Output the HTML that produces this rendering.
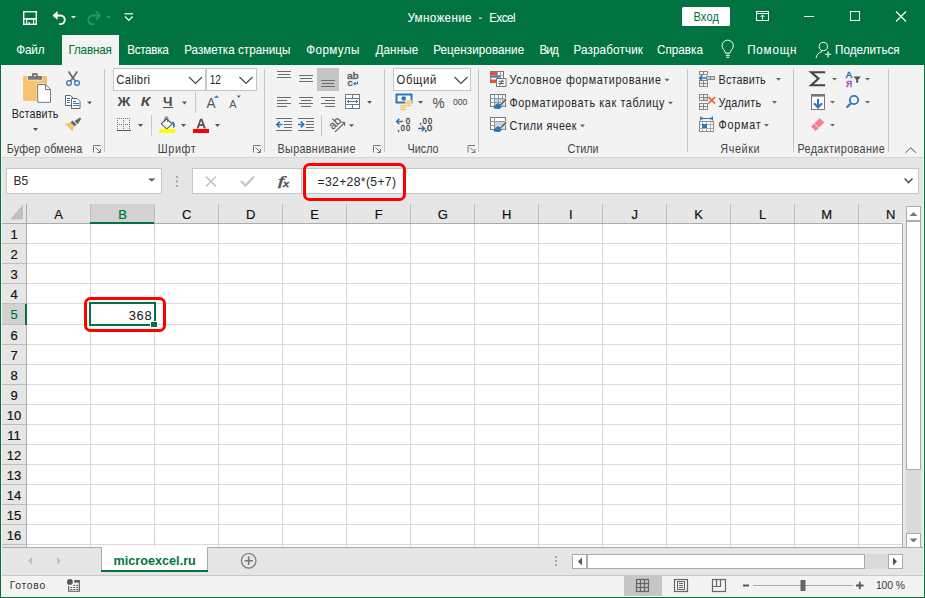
<!DOCTYPE html>
<html><head><meta charset="utf-8"><title>Excel</title>
<style>
html,body{margin:0;padding:0;width:925px;height:598px;overflow:hidden;background:#fff;}
svg{display:block;font-family:"Liberation Sans",sans-serif;}
</style></head><body>
<svg width="925" height="598" viewBox="0 0 925 598" shape-rendering="crispEdges">
<g shape-rendering="auto">
<rect x="0" y="0" width="925" height="65" fill="#007340" />
<rect x="0" y="65" width="925" height="92" fill="#F3F3F3" />
<line x1="0" y1="157.5" x2="925" y2="157.5" stroke="#D6D6D6" stroke-width="1" />
<rect x="0" y="158" width="925" height="390" fill="#E6E6E6" />
<rect x="23.7" y="11.7" width="12.6" height="12.6" fill="none" stroke="#fff" stroke-width="1.4" />
<line x1="23.7" y1="18.9" x2="36.3" y2="18.9" stroke="#fff" stroke-width="1.4" />
<path d="M26.6 24.3v-5.4h7v5.4" fill="none" stroke="#fff" stroke-width="1.2" />
<rect x="28.5" y="22" width="1.6" height="2.3" fill="#fff" />
<path d="M53.5 15.5h7a4.3 4.3 0 0 1 0 8.6h-1.5" fill="none" stroke="#fff" stroke-width="1.9" />
<path d="M53 15.5l4.2-3.8v7.6z" fill="#fff" stroke="#fff" stroke-width="0.8" />
<path d="M71 16h5l-2.5 2.6z" fill="#fff" />
<path d="M100 15.5h-7.5a4.3 4.3 0 0 0 0 8.6h1.5" fill="none" stroke="#1f9a73" stroke-width="1.8" />
<path d="M96 11.5l4 4-4 4" fill="none" stroke="#1f9a73" stroke-width="1.8" />
<path d="M106 16h5l-2.5 2.6z" fill="#1f9a73" />
<line x1="124.5" y1="13.8" x2="133" y2="13.8" stroke="#fff" stroke-width="1.2" />
<path d="M125 16.5l3.8 4 3.8-4" fill="none" stroke="#fff" stroke-width="1.2" />
<text x="428.84" y="21.9" transform="scale(0.95,1)" font-size="12.3" fill="#fff" stroke="#fff" stroke-width="0.05" textLength="67.58" lengthAdjust="spacing" >Умножение</text>
<rect x="479" y="17.6" width="2.8" height="1.1" fill="#fff" />
<text x="514.95" y="21.9" transform="scale(0.95,1)" font-size="12.3" fill="#fff" stroke="#fff" stroke-width="0.05" textLength="27.79" lengthAdjust="spacing" >Excel</text>
<rect x="682" y="7" width="48" height="19" fill="#fff" rx="1.5" />
<text x="770.44" y="21.1" transform="scale(0.9,1)" font-size="12.3" fill="#007340" textLength="28.44" lengthAdjust="spacing" >Вход</text>
<rect x="756.5" y="11.5" width="12" height="9" fill="none" stroke="#fff" stroke-width="1" />
<line x1="756.5" y1="13.5" x2="768.5" y2="13.5" stroke="#fff" stroke-width="1" />
<line x1="762.5" y1="19.5" x2="762.5" y2="15" stroke="#fff" stroke-width="1" />
<path d="M760.5 17l2-2 2 2" fill="none" stroke="#fff" stroke-width="1" />
<line x1="804" y1="16.5" x2="814" y2="16.5" stroke="#fff" stroke-width="1" />
<rect x="850.5" y="11.5" width="9" height="9" fill="none" stroke="#fff" stroke-width="1" />
<path d="M896 11.5l10 10M906 11.5l-10 10" fill="none" stroke="#fff" stroke-width="1.1" />
<rect x="62" y="35" width="57" height="30" fill="#F3F3F3" />
<text x="17.05" y="53.9" transform="scale(0.95,1)" font-size="12.3" fill="#fff" stroke="#fff" stroke-width="0.05" textLength="29.89" lengthAdjust="spacing" >Файл</text>
<text x="72.00" y="53.9" transform="scale(0.95,1)" font-size="12.3" fill="#007340" stroke="#007340" stroke-width="0.05" textLength="45.79" lengthAdjust="spacing" >Главная</text>
<text x="133.89" y="53.9" transform="scale(0.95,1)" font-size="12.3" fill="#fff" stroke="#fff" stroke-width="0.05" textLength="43.68" lengthAdjust="spacing" >Вставка</text>
<text x="193.89" y="53.9" transform="scale(0.95,1)" font-size="12.3" fill="#fff" stroke="#fff" stroke-width="0.05" textLength="111.68" lengthAdjust="spacing" >Разметка страницы</text>
<text x="322.32" y="53.9" transform="scale(0.95,1)" font-size="12.3" fill="#fff" stroke="#fff" stroke-width="0.05" textLength="56.11" lengthAdjust="spacing" >Формулы</text>
<text x="395.16" y="53.9" transform="scale(0.95,1)" font-size="12.3" fill="#fff" stroke="#fff" stroke-width="0.05" textLength="45.16" lengthAdjust="spacing" >Данные</text>
<text x="456.00" y="53.9" transform="scale(0.95,1)" font-size="12.3" fill="#fff" stroke="#fff" stroke-width="0.05" textLength="95.79" lengthAdjust="spacing" >Рецензирование</text>
<text x="567.79" y="53.9" transform="scale(0.95,1)" font-size="12.3" fill="#fff" stroke="#fff" stroke-width="0.05" textLength="20.42" lengthAdjust="spacing" >Вид</text>
<text x="603.58" y="53.9" transform="scale(0.95,1)" font-size="12.3" fill="#fff" stroke="#fff" stroke-width="0.05" textLength="73.26" lengthAdjust="spacing" >Разработчик</text>
<text x="691.58" y="53.9" transform="scale(0.95,1)" font-size="12.3" fill="#fff" stroke="#fff" stroke-width="0.05" textLength="48.42" lengthAdjust="spacing" >Справка</text>
<text x="786.53" y="53.9" transform="scale(0.95,1)" font-size="12.3" fill="#fff" stroke="#fff" stroke-width="0.05" textLength="51.89" lengthAdjust="spacing" >Помощн</text>
<text x="878.95" y="53.9" transform="scale(0.95,1)" font-size="12.3" fill="#fff" stroke="#fff" stroke-width="0.05" textLength="68.11" lengthAdjust="spacing" >Поделиться</text>
<line x1="176.5" y1="38" x2="176.5" y2="61" stroke="#066C3B" stroke-width="1" />
<line x1="298.5" y1="38" x2="298.5" y2="61" stroke="#066C3B" stroke-width="1" />
<line x1="367.5" y1="38" x2="367.5" y2="61" stroke="#066C3B" stroke-width="1" />
<line x1="425.5" y1="38" x2="425.5" y2="61" stroke="#066C3B" stroke-width="1" />
<line x1="531.5" y1="38" x2="531.5" y2="61" stroke="#066C3B" stroke-width="1" />
<line x1="566.5" y1="38" x2="566.5" y2="61" stroke="#066C3B" stroke-width="1" />
<line x1="649.5" y1="38" x2="649.5" y2="61" stroke="#066C3B" stroke-width="1" />
<line x1="709.5" y1="38" x2="709.5" y2="61" stroke="#066C3B" stroke-width="1" />
<path d="M725.6 53.2c-0.3-1.6-1.2-2.7-2.2-3.9a5.6 5.6 0 1 1 8.6 0c-1 1.2-1.9 2.3-2.2 3.9z" fill="none" stroke="#fff" stroke-width="1" />
<line x1="725.8" y1="55.3" x2="729.8" y2="55.3" stroke="#fff" stroke-width="1" />
<line x1="726.3" y1="57.3" x2="729.3" y2="57.3" stroke="#fff" stroke-width="1" />
<circle cx="823.3" cy="46.5" r="4.1" fill="none" stroke="#fff" stroke-width="1"/>
<path d="M816 58.2c0.6-3.6 2.8-6 6.2-6.6" fill="none" stroke="#fff" stroke-width="1" />
<path d="M828.1 51.2v6.2M825 54.3h6.2" fill="none" stroke="#fff" stroke-width="1.1" />
<text x="7.44" y="153.5" transform="scale(0.9,1)" font-size="12" fill="#444" textLength="84.00" lengthAdjust="spacing" >Буфер обмена</text>
<text x="175.33" y="153.5" transform="scale(0.9,1)" font-size="12" fill="#444" textLength="42.22" lengthAdjust="spacing" >Шрифт</text>
<text x="308.44" y="153.5" transform="scale(0.9,1)" font-size="12" fill="#444" textLength="86.44" lengthAdjust="spacing" >Выравнивание</text>
<text x="452.67" y="153.5" transform="scale(0.9,1)" font-size="12" fill="#444" textLength="34.67" lengthAdjust="spacing" >Число</text>
<text x="630.67" y="153.5" transform="scale(0.9,1)" font-size="12" fill="#444" textLength="34.44" lengthAdjust="spacing" >Стили</text>
<text x="800.22" y="153.5" transform="scale(0.9,1)" font-size="12" fill="#444" textLength="43.78" lengthAdjust="spacing" >Ячейки</text>
<text x="886.00" y="153.5" transform="scale(0.9,1)" font-size="12" fill="#444" textLength="97.11" lengthAdjust="spacing" >Редактирование</text>
<line x1="104.5" y1="69" x2="104.5" y2="152" stroke="#C8C8C8" stroke-width="1" />
<line x1="264.5" y1="69" x2="264.5" y2="152" stroke="#C8C8C8" stroke-width="1" />
<line x1="384.5" y1="69" x2="384.5" y2="152" stroke="#C8C8C8" stroke-width="1" />
<line x1="478.5" y1="69" x2="478.5" y2="152" stroke="#C8C8C8" stroke-width="1" />
<line x1="687.5" y1="69" x2="687.5" y2="152" stroke="#C8C8C8" stroke-width="1" />
<line x1="793.5" y1="69" x2="793.5" y2="152" stroke="#C8C8C8" stroke-width="1" />
<line x1="888.5" y1="69" x2="888.5" y2="152" stroke="#C8C8C8" stroke-width="1" />
<path d="M93.5 152.5v-7h7" fill="none" stroke="#777" stroke-width="1" />
<path d="M95.5 147.5l5 5M100.5 149v3.5h-3.5" fill="none" stroke="#777" stroke-width="1" />
<path d="M253.5 152.5v-7h7" fill="none" stroke="#777" stroke-width="1" />
<path d="M255.5 147.5l5 5M260.5 149v3.5h-3.5" fill="none" stroke="#777" stroke-width="1" />
<path d="M373.5 152.5v-7h7" fill="none" stroke="#777" stroke-width="1" />
<path d="M375.5 147.5l5 5M380.5 149v3.5h-3.5" fill="none" stroke="#777" stroke-width="1" />
<path d="M468.0 152.5v-7h7" fill="none" stroke="#777" stroke-width="1" />
<path d="M470.0 147.5l5 5M475.0 149v3.5h-3.5" fill="none" stroke="#777" stroke-width="1" />
<path d="M905.5 152.8l5.3-5 5.3 5" fill="none" stroke="#444" stroke-width="0.9" />
<rect x="23" y="76" width="24" height="25" fill="#F7C36E" rx="1" />
<path d="M27.5 76.2h15v4.3h-15z" fill="#F3F3F3" />
<rect x="28" y="76" width="14" height="3.7" fill="#777" rx="0.5" />
<rect x="32" y="73" width="5.7" height="4" fill="#777" rx="1" />
<circle cx="34.9" cy="75.6" r="0.9" fill="#F3F3F3"/>
<path d="M36.7 83.5h9.2l5.5 5.5v14.1h-14.7z" fill="#F3F3F3" />
<path d="M37.7 84.5h8l4.8 4.8v13h-12.8z" fill="#fff" stroke="#777" stroke-width="1" />
<path d="M45.5 84.5v5h5" fill="none" stroke="#777" stroke-width="1" />
<text x="13.00" y="117.7" transform="scale(0.9,1)" font-size="12" fill="#262626" textLength="52.00" lengthAdjust="spacing" >Вставить</text>
<path d="M33 128h5l-2.5 3z" fill="#555" />
<path d="M68.6 71.5l4.3 6.5 4.3-6.5" fill="none" stroke="#666" stroke-width="1.6" />
<path d="M72.9 78l-3 3.5M72.9 78l3 3.5" fill="none" stroke="#666" stroke-width="1.3" />
<circle cx="69" cy="83" r="2.4" fill="none" stroke="#2E75B6" stroke-width="1.2"/>
<circle cx="77" cy="83" r="2.4" fill="none" stroke="#2E75B6" stroke-width="1.2"/>
<path d="M65.5 95.5h5l2.5 2.5v7.5h-7.5z" fill="#fff" stroke="#666" stroke-width="1" />
<path d="M71.5 98.5h5.5l3 3v7h-8.5z" fill="#fff" stroke="#666" stroke-width="1" />
<line x1="67" y1="98.5" x2="70" y2="98.5" stroke="#2E75B6" stroke-width="1" />
<line x1="67" y1="100.5" x2="70" y2="100.5" stroke="#2E75B6" stroke-width="1" />
<line x1="67" y1="102.5" x2="70" y2="102.5" stroke="#2E75B6" stroke-width="1" />
<line x1="73" y1="101.5" x2="76" y2="101.5" stroke="#2E75B6" stroke-width="1" />
<line x1="73" y1="103.5" x2="79" y2="103.5" stroke="#2E75B6" stroke-width="1" />
<line x1="73" y1="105.5" x2="79" y2="105.5" stroke="#2E75B6" stroke-width="1" />
<path d="M87 101.5h5l-2.5 2.8z" fill="#555" />
<path d="M65 124l5-1.5 4 4-1.5 5z" fill="#F7C36E" />
<path d="M70.5 122.5l2-2 4 4-2 2z" fill="#666" />
<path d="M74.5 121l5.5-3.5 1.2 1.2-3.5 5.5z" fill="#666" />
<rect x="113.5" y="68.5" width="92" height="22" fill="#fff" stroke="#C6C6C6" stroke-width="1" />
<rect x="206.5" y="68.5" width="50" height="22" fill="#fff" stroke="#C6C6C6" stroke-width="1" />
<text x="129.11" y="83.6" transform="scale(0.9,1)" font-size="12.5" fill="#262626" textLength="37.56" lengthAdjust="spacing" >Calibri</text>
<text x="209.7" y="83.6" font-size="12.5" fill="#262626" textLength="11.3" lengthAdjust="spacingAndGlyphs" text-anchor="start" >12</text>
<path d="M189 77l6.5 6.5 6.5-6.5" fill="none" stroke="#444" stroke-width="1.1" />
<path d="M239.5 77l6.5 6.5 6.5-6.5" fill="none" stroke="#444" stroke-width="1.1" />
<text x="117.5" y="105.9" font-size="12.6" fill="#4A4A4A" font-weight="bold" textLength="12.9" lengthAdjust="spacingAndGlyphs" text-anchor="start" >Ж</text>
<text x="140.8" y="105.9" font-size="12.6" fill="#4A4A4A" font-weight="bold" textLength="9.5" lengthAdjust="spacingAndGlyphs" text-anchor="start" font-style="italic">К</text>
<text x="163.0" y="105.9" font-size="12.6" fill="#4A4A4A" font-weight="bold" textLength="9.5" lengthAdjust="spacingAndGlyphs" text-anchor="start" >Ч</text>
<line x1="163" y1="107.5" x2="173" y2="107.5" stroke="#4A4A4A" stroke-width="1" />
<path d="M182 101.5h5l-2.5 3z" fill="#555" />
<line x1="195.5" y1="92" x2="195.5" y2="113" stroke="#C8C8C8" stroke-width="1" />
<text x="206.4" y="107.7" font-size="13.8" fill="#555" textLength="9.1" lengthAdjust="spacingAndGlyphs" text-anchor="start" >A</text>
<path d="M214 97.8l2.5-2.6 2.5 2.6z" fill="#2E75B6" />
<text x="229.2" y="107.9" font-size="11.2" fill="#555" textLength="7.3" lengthAdjust="spacingAndGlyphs" text-anchor="start" >A</text>
<path d="M236.5 95.4h4.5l-2.25 2.6z" fill="#2E75B6" />
<path d="M117 118.5h14" fill="none" stroke="#777" stroke-width="1" stroke-dasharray="1 1"/>
<path d="M117 124.5h14" fill="none" stroke="#777" stroke-width="1" stroke-dasharray="1 1"/>
<path d="M117.5 118v12" fill="none" stroke="#777" stroke-width="1" stroke-dasharray="1 1"/>
<path d="M123.5 118v12" fill="none" stroke="#777" stroke-width="1" stroke-dasharray="1 1"/>
<path d="M129.5 118v12" fill="none" stroke="#777" stroke-width="1" stroke-dasharray="1 1"/>
<line x1="117" y1="130.5" x2="131" y2="130.5" stroke="#555" stroke-width="1" />
<path d="M138 124h5l-2.5 3z" fill="#555" />
<line x1="151.5" y1="115" x2="151.5" y2="135.5" stroke="#C8C8C8" stroke-width="1" />
<path d="M161.3 123.8l5-5 6 5-5.5 5z" fill="#fff" stroke="#555" stroke-width="1.1" />
<path d="M165 121.5v-3.2a1.4 1.4 0 0 1 2.8 0v3.8" fill="none" stroke="#555" stroke-width="1" />
<path d="M172.2 121.3c1.8 0.8 3 2.3 2.8 4.3-0.3 1.5-1.2 2.3-2.2 2.7 0.5-1.5 0.6-3.5-0.6-4.8z" fill="#2E75B6" />
<rect x="159" y="129" width="16" height="4" fill="#FFFF00" />
<path d="M181 124h5l-2.5 3z" fill="#555" />
<path d="M196.5 128.6l3.6-9.9h2.2l3.6 9.9h-2.1l-0.9-2.6h-3.5l-0.9 2.6zM199.9 124.3h2.5l-1.25-3.7z" fill="#555" />
<rect x="193" y="129" width="16" height="4" fill="#FF0000" />
<path d="M215 124h5l-2.5 3z" fill="#555" />
<line x1="277" y1="71.5" x2="291" y2="71.5" stroke="#6B6B6B" stroke-width="1" />
<line x1="278" y1="74.5" x2="290" y2="74.5" stroke="#6B6B6B" stroke-width="1" />
<line x1="277" y1="77.5" x2="291" y2="77.5" stroke="#6B6B6B" stroke-width="1" />
<line x1="299" y1="75.5" x2="313" y2="75.5" stroke="#6B6B6B" stroke-width="1" />
<line x1="300" y1="78.5" x2="312" y2="78.5" stroke="#6B6B6B" stroke-width="1" />
<line x1="299" y1="81.5" x2="313" y2="81.5" stroke="#6B6B6B" stroke-width="1" />
<rect x="317" y="68" width="22" height="23" fill="#C6C6C6" />
<line x1="321" y1="80.5" x2="335" y2="80.5" stroke="#6B6B6B" stroke-width="1" />
<line x1="322" y1="83.5" x2="334" y2="83.5" stroke="#6B6B6B" stroke-width="1" />
<line x1="321" y1="86.5" x2="335" y2="86.5" stroke="#6B6B6B" stroke-width="1" />
<text x="346.9" y="78.7" font-size="8.6" fill="#555" stroke="#555" stroke-width="0.35" textLength="11.5" lengthAdjust="spacingAndGlyphs" text-anchor="start" >ab</text>
<text x="347.4" y="86.3" font-size="8.6" fill="#555" stroke="#555" stroke-width="0.35" textLength="5.1" lengthAdjust="spacingAndGlyphs" text-anchor="start" >c</text>
<path d="M357.5 81.5v2.2h-3.5M355.5 82.2l-1.6 1.5 1.6 1.5" fill="none" stroke="#2E75B6" stroke-width="1.1" />
<line x1="277" y1="97.5" x2="291" y2="97.5" stroke="#6B6B6B" stroke-width="1" />
<line x1="277" y1="100.5" x2="287" y2="100.5" stroke="#6B6B6B" stroke-width="1" />
<line x1="277" y1="103.5" x2="291" y2="103.5" stroke="#6B6B6B" stroke-width="1" />
<line x1="277" y1="106.5" x2="287" y2="106.5" stroke="#6B6B6B" stroke-width="1" />
<line x1="299" y1="97.5" x2="313" y2="97.5" stroke="#6B6B6B" stroke-width="1" />
<line x1="301" y1="100.5" x2="311" y2="100.5" stroke="#6B6B6B" stroke-width="1" />
<line x1="299" y1="103.5" x2="313" y2="103.5" stroke="#6B6B6B" stroke-width="1" />
<line x1="301" y1="106.5" x2="311" y2="106.5" stroke="#6B6B6B" stroke-width="1" />
<line x1="321" y1="97.5" x2="335" y2="97.5" stroke="#6B6B6B" stroke-width="1" />
<line x1="325" y1="100.5" x2="335" y2="100.5" stroke="#6B6B6B" stroke-width="1" />
<line x1="321" y1="103.5" x2="335" y2="103.5" stroke="#6B6B6B" stroke-width="1" />
<line x1="325" y1="106.5" x2="335" y2="106.5" stroke="#6B6B6B" stroke-width="1" />
<rect x="345.5" y="94.5" width="14" height="14" fill="#fff" stroke="#777" stroke-width="1" />
<line x1="345.5" y1="98.5" x2="359.5" y2="98.5" stroke="#777" stroke-width="1" />
<line x1="345.5" y1="104.5" x2="359.5" y2="104.5" stroke="#777" stroke-width="1" />
<line x1="352.5" y1="94.5" x2="352.5" y2="98.5" stroke="#777" stroke-width="1" />
<line x1="352.5" y1="104.5" x2="352.5" y2="108.5" stroke="#777" stroke-width="1" />
<rect x="346" y="99" width="13" height="5" fill="#fff" />
<path d="M347.5 101.5h10M349 100l-1.5 1.5 1.5 1.5M356 100l1.5 1.5-1.5 1.5" fill="none" stroke="#2E75B6" stroke-width="1" />
<path d="M367 101h5l-2.5 2.8z" fill="#555" />
<line x1="276" y1="118.5" x2="292" y2="118.5" stroke="#6B6B6B" stroke-width="1" />
<line x1="284" y1="121.5" x2="292" y2="121.5" stroke="#6B6B6B" stroke-width="1" />
<line x1="284" y1="124.5" x2="292" y2="124.5" stroke="#6B6B6B" stroke-width="1" />
<line x1="284" y1="127.5" x2="292" y2="127.5" stroke="#6B6B6B" stroke-width="1" />
<line x1="276" y1="130.5" x2="292" y2="130.5" stroke="#6B6B6B" stroke-width="1" />
<path d="M277 124.5h5.5M279.7 121.6l-2.9 2.9 2.9 2.9" fill="none" stroke="#2E75B6" stroke-width="1.6" />
<line x1="298" y1="118.5" x2="314" y2="118.5" stroke="#6B6B6B" stroke-width="1" />
<line x1="306" y1="121.5" x2="314" y2="121.5" stroke="#6B6B6B" stroke-width="1" />
<line x1="306" y1="124.5" x2="314" y2="124.5" stroke="#6B6B6B" stroke-width="1" />
<line x1="306" y1="127.5" x2="314" y2="127.5" stroke="#6B6B6B" stroke-width="1" />
<line x1="298" y1="130.5" x2="314" y2="130.5" stroke="#6B6B6B" stroke-width="1" />
<path d="M298 124.5h5.5M300.8 121.6l2.9 2.9-2.9 2.9" fill="none" stroke="#2E75B6" stroke-width="1.6" />
<line x1="321.5" y1="115" x2="321.5" y2="136" stroke="#C8C8C8" stroke-width="1" />
<text x="328.6" y="126.8" font-size="11.5" fill="#555" stroke="#555" stroke-width="0.2" textLength="12.6" lengthAdjust="spacingAndGlyphs" text-anchor="start" transform="rotate(-45 334.9 123.2)">ab</text>
<path d="M335 131.8l9.5-9" fill="none" stroke="#555" stroke-width="1.1" />
<path d="M341.2 122.3h3.5v3.5" fill="none" stroke="#555" stroke-width="1" />
<path d="M349 124.3h5l-2.5 2.6z" fill="#555" />
<rect x="393.5" y="68.5" width="77" height="22" fill="#fff" stroke="#C6C6C6" stroke-width="1" />
<text x="440.44" y="84.0" transform="scale(0.9,1)" font-size="12.5" fill="#262626" textLength="44.44" lengthAdjust="spacing" >Общий</text>
<path d="M454.5 77l6.5 6.5 6.5-6.5" fill="none" stroke="#444" stroke-width="1.1" />
<rect x="396.5" y="94.5" width="15" height="8" fill="#fff" stroke="#2E75B6" stroke-width="2" />
<circle cx="403.7" cy="98.5" r="2.3" fill="#2E75B6"/>
<ellipse cx="408.5" cy="101" rx="3.6" ry="1.1" fill="#F7C36E" stroke="#F3F3F3" stroke-width="0.5"/>
<ellipse cx="408.5" cy="103.2" rx="3.6" ry="1.1" fill="#F7C36E" stroke="#F3F3F3" stroke-width="0.5"/>
<ellipse cx="408.5" cy="105.4" rx="3.6" ry="1.1" fill="#F7C36E" stroke="#F3F3F3" stroke-width="0.5"/>
<ellipse cx="403.3" cy="105.5" rx="3.6" ry="1.1" fill="#F7C36E" stroke="#F3F3F3" stroke-width="0.5"/>
<ellipse cx="403.3" cy="107.7" rx="3.6" ry="1.1" fill="#F7C36E" stroke="#F3F3F3" stroke-width="0.5"/>
<ellipse cx="403.3" cy="109.6" rx="3.6" ry="1.1" fill="#F7C36E" stroke="#F3F3F3" stroke-width="0.5"/>
<path d="M418 101h5l-2.5 2.8z" fill="#555" />
<text x="432.5" y="108.0" font-size="15.5" fill="#555" stroke="#555" stroke-width="0.1" textLength="12.1" lengthAdjust="spacingAndGlyphs" text-anchor="start" >%</text>
<text x="453.0" y="104.9" font-size="9.8" fill="#444" textLength="14.3" lengthAdjust="spacingAndGlyphs" text-anchor="start" >000</text>
<path d="M396.5 121.5h6.5M399.3 118.8l-2.7 2.7 2.7 2.7" fill="none" stroke="#2E75B6" stroke-width="1.5" />
<text x="405.8" y="123.7" font-size="8.2" fill="#444" stroke="#444" stroke-width="0.35" textLength="4.4" lengthAdjust="spacingAndGlyphs" text-anchor="start" >0</text>
<text x="441.67" y="130.6" transform="scale(0.9,1)" font-size="8.2" fill="#444" stroke="#444" stroke-width="0.35" textLength="14.11" lengthAdjust="spacing" >,00</text>
<text x="466.11" y="123.7" transform="scale(0.9,1)" font-size="8.2" fill="#444" stroke="#444" stroke-width="0.35" textLength="14.11" lengthAdjust="spacing" >,00</text>
<path d="M418 128.5h6.5M421.8 125.8l2.7 2.7-2.7 2.7" fill="none" stroke="#2E75B6" stroke-width="1.5" />
<text x="424.5" y="130.6" font-size="8.2" fill="#444" stroke="#444" stroke-width="0.35" textLength="7.7" lengthAdjust="spacingAndGlyphs" text-anchor="start" >,0</text>
<rect x="490.5" y="71.5" width="13" height="11" fill="#fff" stroke="#777" stroke-width="1" />
<line x1="497.5" y1="71.5" x2="497.5" y2="82.5" stroke="#999" stroke-width="1" />
<line x1="500.5" y1="71.5" x2="500.5" y2="78" stroke="#999" stroke-width="1" />
<line x1="490.5" y1="75.5" x2="503.5" y2="75.5" stroke="#999" stroke-width="1" />
<rect x="491" y="72" width="6" height="3" fill="#F25022" />
<rect x="491" y="76" width="9" height="1.6" fill="#2E75B6" />
<rect x="491" y="79.5" width="6" height="3" fill="#F25022" />
<rect x="496.5" y="78.5" width="9.5" height="8" fill="#fff" stroke="#777" stroke-width="1" />
<path d="M498.5 81.3h5.5M498.5 83.5h5.5M502.7 79.8l-3 5.5" fill="none" stroke="#444" stroke-width="0.9" />
<text x="566.00" y="84.0" transform="scale(0.9,1)" font-size="12" fill="#262626" textLength="168.44" lengthAdjust="spacing" >Условное форматирование</text>
<path d="M664.5 78.8h5l-2.5 2.7z" fill="#666" />
<rect x="490.5" y="94.5" width="15" height="12" fill="#fff" stroke="#777" stroke-width="1" />
<rect x="494" y="98" width="10.5" height="8.5" fill="#BDD7EE" />
<line x1="494.5" y1="94.5" x2="494.5" y2="106.5" stroke="#999" stroke-width="1" />
<line x1="498.5" y1="94.5" x2="498.5" y2="106.5" stroke="#999" stroke-width="1" />
<line x1="502.5" y1="94.5" x2="502.5" y2="106.5" stroke="#999" stroke-width="1" />
<line x1="490.5" y1="98.5" x2="505.5" y2="98.5" stroke="#999" stroke-width="1" />
<line x1="490.5" y1="102.5" x2="505.5" y2="102.5" stroke="#999" stroke-width="1" />
<path d="M499.5 104.5l5.8-6.3 1.9 1.9-6.3 5.8z" fill="#666" stroke="#F3F3F3" stroke-width="0.8" />
<path d="M493.6 108.6c0.3-2.9 2.4-5.1 5.2-5.4l3 3c-0.4 2.7-2.8 3.3-8.2 2.4z" fill="#2E75B6" />
<text x="566.00" y="106.8" transform="scale(0.9,1)" font-size="12" fill="#262626" textLength="172.33" lengthAdjust="spacing" >Форматировать как таблицу</text>
<path d="M668 101.8h5l-2.5 2.7z" fill="#666" />
<rect x="490.5" y="117.5" width="15" height="12" fill="#fff" stroke="#777" stroke-width="1" />
<rect x="494" y="121" width="10.5" height="8.5" fill="#BDD7EE" />
<line x1="494.5" y1="117.5" x2="494.5" y2="129.5" stroke="#999" stroke-width="1" />
<line x1="490.5" y1="121.5" x2="505.5" y2="121.5" stroke="#999" stroke-width="1" />
<line x1="490.5" y1="125.5" x2="494.5" y2="125.5" stroke="#999" stroke-width="1" />
<path d="M499.5 127.5l5.8-6.3 1.9 1.9-6.3 5.8z" fill="#666" stroke="#F3F3F3" stroke-width="0.8" />
<path d="M493.6 131.6c0.3-2.9 2.4-5.1 5.2-5.4l3 3c-0.4 2.7-2.8 3.3-8.2 2.4z" fill="#2E75B6" />
<text x="566.00" y="129.7" transform="scale(0.9,1)" font-size="12" fill="#262626" textLength="74.67" lengthAdjust="spacing" >Стили ячеек</text>
<path d="M580 124.6h5l-2.5 2.7z" fill="#666" />
<rect x="699.5" y="71.5" width="4" height="3" fill="none" stroke="#888" stroke-width="1" />
<rect x="703.5" y="71.5" width="4" height="3" fill="none" stroke="#888" stroke-width="1" />
<rect x="699.5" y="80.5" width="4" height="3" fill="none" stroke="#888" stroke-width="1" />
<rect x="703.5" y="80.5" width="4" height="3" fill="none" stroke="#888" stroke-width="1" />
<rect x="699.5" y="83.5" width="4" height="3" fill="none" stroke="#888" stroke-width="1" />
<rect x="703.5" y="83.5" width="4" height="3" fill="none" stroke="#888" stroke-width="1" />
<rect x="706.5" y="76.5" width="4" height="3" fill="#BDD7EE" stroke="#888" stroke-width="1" />
<rect x="710.5" y="76.5" width="4" height="3" fill="#BDD7EE" stroke="#888" stroke-width="1" />
<path d="M699.5 78h6.5M702.3 75.3l-2.7 2.7 2.7 2.7" fill="none" stroke="#2E75B6" stroke-width="1.6" />
<text x="798.44" y="84.2" transform="scale(0.9,1)" font-size="12" fill="#262626" textLength="52.33" lengthAdjust="spacing" >Вставить</text>
<path d="M776 78h5l-2.5 2.7z" fill="#666" />
<rect x="699.5" y="94.5" width="4" height="3" fill="none" stroke="#888" stroke-width="1" />
<rect x="703.5" y="94.5" width="4" height="3" fill="none" stroke="#888" stroke-width="1" />
<rect x="699.5" y="97.5" width="4" height="3" fill="none" stroke="#888" stroke-width="1" />
<rect x="703.5" y="97.5" width="4" height="3" fill="#BDD7EE" stroke="#888" stroke-width="1" />
<rect x="699.5" y="103.5" width="4" height="3" fill="none" stroke="#888" stroke-width="1" />
<rect x="703.5" y="103.5" width="4" height="3" fill="none" stroke="#888" stroke-width="1" />
<rect x="699.5" y="106.5" width="4" height="3" fill="none" stroke="#888" stroke-width="1" />
<rect x="703.5" y="106.5" width="4" height="3" fill="none" stroke="#888" stroke-width="1" />
<path d="M708.5 97l6.5 6.5M715 97l-6.5 6.5" fill="none" stroke="#F25022" stroke-width="1.5" />
<text x="798.44" y="107.2" transform="scale(0.9,1)" font-size="12" fill="#262626" textLength="47.33" lengthAdjust="spacing" >Удалить</text>
<path d="M772 101h5l-2.5 2.7z" fill="#666" />
<path d="M700.5 118.5h12M700.5 116.5v4M712.5 116.5v4M702.5 117l-1.5 1.5 1.5 1.5M710.5 117l1.5 1.5-1.5 1.5" fill="none" stroke="#2E75B6" stroke-width="1" />
<rect x="699.5" y="121.5" width="14" height="10" fill="#fff" stroke="#888" stroke-width="1" />
<line x1="699.5" y1="124.5" x2="713.5" y2="124.5" stroke="#aaa" stroke-width="1" />
<line x1="699.5" y1="128.5" x2="713.5" y2="128.5" stroke="#aaa" stroke-width="1" />
<line x1="702.5" y1="121.5" x2="702.5" y2="131.5" stroke="#aaa" stroke-width="1" />
<line x1="706.5" y1="121.5" x2="706.5" y2="131.5" stroke="#aaa" stroke-width="1" />
<line x1="710.5" y1="121.5" x2="710.5" y2="131.5" stroke="#aaa" stroke-width="1" />
<rect x="702" y="124" width="5" height="4" fill="#2E75B6" />
<text x="798.44" y="129.3" transform="scale(0.9,1)" font-size="12" fill="#262626" textLength="46.78" lengthAdjust="spacing" >Формат</text>
<path d="M764 124h5l-2.5 2.7z" fill="#666" />
<path d="M825.2 72.2h-14l7.3 6.4-7.3 6.6h14" fill="none" stroke="#444" stroke-width="2.1" />
<path d="M832 78h5l-2.5 2.6z" fill="#666" />
<text x="845.7" y="77.6" font-size="9.6" fill="#2E75B6" stroke="#2E75B6" stroke-width="0.5" textLength="6.3" lengthAdjust="spacingAndGlyphs" text-anchor="start" >А</text>
<text x="845.9" y="86.6" font-size="9.8" fill="#9B4FB5" stroke="#9B4FB5" stroke-width="0.5" textLength="6.1" lengthAdjust="spacingAndGlyphs" text-anchor="start" >Я</text>
<path d="M853.5 76.5h7.5l-2.8 3.2v3h-2v-3z" fill="#555" />
<path d="M865 78h5l-2.5 2.6z" fill="#666" />
<rect x="811.5" y="94.5" width="13" height="15" fill="#fff" stroke="#777" stroke-width="1" />
<rect x="811" y="94" width="14" height="2.6" fill="#777" />
<path d="M818 99v7.5" fill="none" stroke="#2E75B6" stroke-width="2" />
<path d="M814 103.3l4 4.2 4-4.2" fill="none" stroke="#2E75B6" stroke-width="2" />
<path d="M830 101h5l-2.5 2.6z" fill="#666" />
<circle cx="854" cy="100" r="4.2" fill="none" stroke="#2E75B6" stroke-width="1.8"/>
<path d="M850.8 103.5l-4.3 4" fill="none" stroke="#2E75B6" stroke-width="2.2" />
<path d="M865 101h5l-2.5 2.6z" fill="#666" />
<path d="M819.8 117.9L824.3 122.4 815.6 131 811.1 126.5z" fill="#F4808F" />
<path d="M814.2 123.4l4.5 4.5" fill="none" stroke="#F3F3F3" stroke-width="0.9" />
<path d="M830 124h5l-2.5 2.6z" fill="#666" />
<rect x="6.5" y="168.5" width="155" height="25" fill="#fff" stroke="#C6C6C6" stroke-width="1" />
<text x="13.4" y="185.3" font-size="12.4" fill="#262626" textLength="14.7" lengthAdjust="spacingAndGlyphs" text-anchor="start" >B5</text>
<path d="M148 178.5h7.5l-3.75 3z" fill="#555" />
<rect x="176" y="176" width="2" height="2" fill="#AAA" />
<rect x="176" y="180.5" width="2" height="2" fill="#AAA" />
<rect x="176" y="185" width="2" height="2" fill="#AAA" />
<rect x="192.5" y="168.5" width="109" height="25" fill="#fff" stroke="#C6C6C6" stroke-width="1" />
<path d="M206 176.5l10 10M216 176.5l-10 10" fill="none" stroke="#C4C4C4" stroke-width="1.7" />
<path d="M241 181l4.5 4.5 8.5-9" fill="none" stroke="#C4C4C4" stroke-width="2.3" />
<text x="278.0" y="185.4" font-size="13" fill="#555" stroke="#555" stroke-width="0.5" textLength="6.0" lengthAdjust="spacingAndGlyphs" text-anchor="start" font-style="italic" font-family="Liberation Serif">f</text>
<text x="283.0" y="187.4" font-size="10" fill="#555" stroke="#555" stroke-width="0.5" textLength="6.0" lengthAdjust="spacingAndGlyphs" text-anchor="start" font-style="italic" font-family="Liberation Serif">x</text>
<rect x="301.5" y="168.5" width="617" height="25" fill="#fff" stroke="#C6C6C6" stroke-width="1" />
<text x="352.78" y="185.8" transform="scale(0.9,1)" font-size="13.5" fill="#262626" textLength="87.22" lengthAdjust="spacing" >=32+28*(5+7)</text>
<path d="M904.5 178.5l4 4 4-4" fill="none" stroke="#555" stroke-width="1.6" />
<rect x="27" y="224" width="875" height="323" fill="#fff" />
<line x1="27" y1="243.5" x2="902" y2="243.5" stroke="#D9D9D9" stroke-width="1" />
<line x1="27" y1="263.5" x2="902" y2="263.5" stroke="#D9D9D9" stroke-width="1" />
<line x1="27" y1="283.5" x2="902" y2="283.5" stroke="#D9D9D9" stroke-width="1" />
<line x1="27" y1="303.5" x2="902" y2="303.5" stroke="#D9D9D9" stroke-width="1" />
<line x1="27" y1="324.5" x2="902" y2="324.5" stroke="#D9D9D9" stroke-width="1" />
<line x1="27" y1="344.5" x2="902" y2="344.5" stroke="#D9D9D9" stroke-width="1" />
<line x1="27" y1="364.5" x2="902" y2="364.5" stroke="#D9D9D9" stroke-width="1" />
<line x1="27" y1="384.5" x2="902" y2="384.5" stroke="#D9D9D9" stroke-width="1" />
<line x1="27" y1="404.5" x2="902" y2="404.5" stroke="#D9D9D9" stroke-width="1" />
<line x1="27" y1="424.5" x2="902" y2="424.5" stroke="#D9D9D9" stroke-width="1" />
<line x1="27" y1="444.5" x2="902" y2="444.5" stroke="#D9D9D9" stroke-width="1" />
<line x1="27" y1="464.5" x2="902" y2="464.5" stroke="#D9D9D9" stroke-width="1" />
<line x1="27" y1="484.5" x2="902" y2="484.5" stroke="#D9D9D9" stroke-width="1" />
<line x1="27" y1="504.5" x2="902" y2="504.5" stroke="#D9D9D9" stroke-width="1" />
<line x1="27" y1="524.5" x2="902" y2="524.5" stroke="#D9D9D9" stroke-width="1" />
<line x1="27" y1="544.5" x2="902" y2="544.5" stroke="#D9D9D9" stroke-width="1" />
<line x1="90.5" y1="224" x2="90.5" y2="547" stroke="#D9D9D9" stroke-width="1" />
<line x1="154.5" y1="224" x2="154.5" y2="547" stroke="#D9D9D9" stroke-width="1" />
<line x1="218.5" y1="224" x2="218.5" y2="547" stroke="#D9D9D9" stroke-width="1" />
<line x1="282.5" y1="224" x2="282.5" y2="547" stroke="#D9D9D9" stroke-width="1" />
<line x1="346.5" y1="224" x2="346.5" y2="547" stroke="#D9D9D9" stroke-width="1" />
<line x1="410.5" y1="224" x2="410.5" y2="547" stroke="#D9D9D9" stroke-width="1" />
<line x1="474.5" y1="224" x2="474.5" y2="547" stroke="#D9D9D9" stroke-width="1" />
<line x1="538.5" y1="224" x2="538.5" y2="547" stroke="#D9D9D9" stroke-width="1" />
<line x1="602.5" y1="224" x2="602.5" y2="547" stroke="#D9D9D9" stroke-width="1" />
<line x1="666.5" y1="224" x2="666.5" y2="547" stroke="#D9D9D9" stroke-width="1" />
<line x1="730.5" y1="224" x2="730.5" y2="547" stroke="#D9D9D9" stroke-width="1" />
<line x1="794.5" y1="224" x2="794.5" y2="547" stroke="#D9D9D9" stroke-width="1" />
<line x1="858.5" y1="224" x2="858.5" y2="547" stroke="#D9D9D9" stroke-width="1" />
<rect x="1" y="204" width="901" height="19" fill="#E6E6E6" />
<rect x="90" y="204" width="64" height="18" fill="#D2D2D2" />
<line x1="90.5" y1="204" x2="90.5" y2="223" stroke="#BDBDBD" stroke-width="1" />
<line x1="154.5" y1="204" x2="154.5" y2="223" stroke="#BDBDBD" stroke-width="1" />
<line x1="218.5" y1="204" x2="218.5" y2="223" stroke="#BDBDBD" stroke-width="1" />
<line x1="282.5" y1="204" x2="282.5" y2="223" stroke="#BDBDBD" stroke-width="1" />
<line x1="346.5" y1="204" x2="346.5" y2="223" stroke="#BDBDBD" stroke-width="1" />
<line x1="410.5" y1="204" x2="410.5" y2="223" stroke="#BDBDBD" stroke-width="1" />
<line x1="474.5" y1="204" x2="474.5" y2="223" stroke="#BDBDBD" stroke-width="1" />
<line x1="538.5" y1="204" x2="538.5" y2="223" stroke="#BDBDBD" stroke-width="1" />
<line x1="602.5" y1="204" x2="602.5" y2="223" stroke="#BDBDBD" stroke-width="1" />
<line x1="666.5" y1="204" x2="666.5" y2="223" stroke="#BDBDBD" stroke-width="1" />
<line x1="730.5" y1="204" x2="730.5" y2="223" stroke="#BDBDBD" stroke-width="1" />
<line x1="794.5" y1="204" x2="794.5" y2="223" stroke="#BDBDBD" stroke-width="1" />
<line x1="858.5" y1="204" x2="858.5" y2="223" stroke="#BDBDBD" stroke-width="1" />
<line x1="1" y1="223.5" x2="902" y2="223.5" stroke="#ABABAB" stroke-width="1" />
<rect x="90" y="222" width="64" height="2" fill="#007340" />
<text x="58.7" y="219.4" font-size="13" fill="#111" stroke="#111" stroke-width="0.2" text-anchor="middle" >A</text>
<text x="122.7" y="219.4" font-size="13" fill="#007340" stroke="#007340" stroke-width="0.2" text-anchor="middle" >B</text>
<text x="186.7" y="219.4" font-size="13" fill="#111" stroke="#111" stroke-width="0.2" text-anchor="middle" >C</text>
<text x="250.7" y="219.4" font-size="13" fill="#111" stroke="#111" stroke-width="0.2" text-anchor="middle" >D</text>
<text x="314.7" y="219.4" font-size="13" fill="#111" stroke="#111" stroke-width="0.2" text-anchor="middle" >E</text>
<text x="378.7" y="219.4" font-size="13" fill="#111" stroke="#111" stroke-width="0.2" text-anchor="middle" >F</text>
<text x="442.7" y="219.4" font-size="13" fill="#111" stroke="#111" stroke-width="0.2" text-anchor="middle" >G</text>
<text x="506.7" y="219.4" font-size="13" fill="#111" stroke="#111" stroke-width="0.2" text-anchor="middle" >H</text>
<text x="570.7" y="219.4" font-size="13" fill="#111" stroke="#111" stroke-width="0.2" text-anchor="middle" >I</text>
<text x="634.7" y="219.4" font-size="13" fill="#111" stroke="#111" stroke-width="0.2" text-anchor="middle" >J</text>
<text x="698.7" y="219.4" font-size="13" fill="#111" stroke="#111" stroke-width="0.2" text-anchor="middle" >K</text>
<text x="762.7" y="219.4" font-size="13" fill="#111" stroke="#111" stroke-width="0.2" text-anchor="middle" >L</text>
<text x="826.7" y="219.4" font-size="13" fill="#111" stroke="#111" stroke-width="0.2" text-anchor="middle" >M</text>
<text x="890.7" y="219.4" font-size="13" fill="#111" stroke="#111" stroke-width="0.2" text-anchor="middle" >N</text>
<rect x="1" y="224" width="25" height="323" fill="#E6E6E6" />
<rect x="1" y="304" width="25" height="20" fill="#D2D2D2" />
<line x1="26.5" y1="204" x2="26.5" y2="547" stroke="#ABABAB" stroke-width="1" />
<line x1="1" y1="243.5" x2="26" y2="243.5" stroke="#BDBDBD" stroke-width="1" />
<line x1="1" y1="263.5" x2="26" y2="263.5" stroke="#BDBDBD" stroke-width="1" />
<line x1="1" y1="283.5" x2="26" y2="283.5" stroke="#BDBDBD" stroke-width="1" />
<line x1="1" y1="303.5" x2="26" y2="303.5" stroke="#BDBDBD" stroke-width="1" />
<line x1="1" y1="324.5" x2="26" y2="324.5" stroke="#BDBDBD" stroke-width="1" />
<line x1="1" y1="344.5" x2="26" y2="344.5" stroke="#BDBDBD" stroke-width="1" />
<line x1="1" y1="364.5" x2="26" y2="364.5" stroke="#BDBDBD" stroke-width="1" />
<line x1="1" y1="384.5" x2="26" y2="384.5" stroke="#BDBDBD" stroke-width="1" />
<line x1="1" y1="404.5" x2="26" y2="404.5" stroke="#BDBDBD" stroke-width="1" />
<line x1="1" y1="424.5" x2="26" y2="424.5" stroke="#BDBDBD" stroke-width="1" />
<line x1="1" y1="444.5" x2="26" y2="444.5" stroke="#BDBDBD" stroke-width="1" />
<line x1="1" y1="464.5" x2="26" y2="464.5" stroke="#BDBDBD" stroke-width="1" />
<line x1="1" y1="484.5" x2="26" y2="484.5" stroke="#BDBDBD" stroke-width="1" />
<line x1="1" y1="504.5" x2="26" y2="504.5" stroke="#BDBDBD" stroke-width="1" />
<line x1="1" y1="524.5" x2="26" y2="524.5" stroke="#BDBDBD" stroke-width="1" />
<line x1="1" y1="544.5" x2="26" y2="544.5" stroke="#BDBDBD" stroke-width="1" />
<text x="14.0" y="238.5" font-size="13" fill="#111" stroke="#111" stroke-width="0.2" text-anchor="middle" >1</text>
<text x="14.0" y="258.5" font-size="13" fill="#111" stroke="#111" stroke-width="0.2" text-anchor="middle" >2</text>
<text x="14.0" y="278.5" font-size="13" fill="#111" stroke="#111" stroke-width="0.2" text-anchor="middle" >3</text>
<text x="14.0" y="298.5" font-size="13" fill="#111" stroke="#111" stroke-width="0.2" text-anchor="middle" >4</text>
<text x="14.0" y="319.0" font-size="13" fill="#007340" stroke="#007340" stroke-width="0.2" text-anchor="middle" >5</text>
<text x="14.0" y="339.5" font-size="13" fill="#111" stroke="#111" stroke-width="0.2" text-anchor="middle" >6</text>
<text x="14.0" y="359.5" font-size="13" fill="#111" stroke="#111" stroke-width="0.2" text-anchor="middle" >7</text>
<text x="14.0" y="379.5" font-size="13" fill="#111" stroke="#111" stroke-width="0.2" text-anchor="middle" >8</text>
<text x="14.0" y="399.5" font-size="13" fill="#111" stroke="#111" stroke-width="0.2" text-anchor="middle" >9</text>
<text x="14.0" y="419.5" font-size="13" fill="#111" stroke="#111" stroke-width="0.2" text-anchor="middle" >10</text>
<text x="14.0" y="439.5" font-size="13" fill="#111" stroke="#111" stroke-width="0.2" text-anchor="middle" >11</text>
<text x="14.0" y="459.5" font-size="13" fill="#111" stroke="#111" stroke-width="0.2" text-anchor="middle" >12</text>
<text x="14.0" y="479.5" font-size="13" fill="#111" stroke="#111" stroke-width="0.2" text-anchor="middle" >13</text>
<text x="14.0" y="499.5" font-size="13" fill="#111" stroke="#111" stroke-width="0.2" text-anchor="middle" >14</text>
<text x="14.0" y="519.5" font-size="13" fill="#111" stroke="#111" stroke-width="0.2" text-anchor="middle" >15</text>
<text x="14.0" y="539.5" font-size="13" fill="#111" stroke="#111" stroke-width="0.2" text-anchor="middle" >16</text>
<rect x="25" y="304" width="2" height="21" fill="#007340" />
<path d="M23 204.5v15h-13z" fill="#BFBFBF" />
<line x1="902.5" y1="224" x2="902.5" y2="547" stroke="#ABABAB" stroke-width="1" />
<line x1="27" y1="547.5" x2="903" y2="547.5" stroke="#ABABAB" stroke-width="1" />
<rect x="90" y="303" width="65" height="22" fill="none" stroke="#007340" stroke-width="2" transform="translate(0,0)"/>
<rect x="150" y="321" width="7" height="7" fill="#fff" />
<rect x="151" y="322" width="6" height="5" fill="#007340" />
<text x="132.68" y="319.6" transform="scale(0.97,1)" font-size="13.3" fill="#1A1A1A" stroke="#1A1A1A" stroke-width="0.05" textLength="23.61" lengthAdjust="spacing" >368</text>
<rect x="85.5" y="298.5" width="79" height="32" fill="none" stroke="#FF0000" stroke-width="3" rx="5" />
<rect x="304.5" y="164.5" width="100" height="35" fill="none" stroke="#FF0000" stroke-width="3" rx="5" />
<rect x="906" y="221" width="15" height="326" fill="#DADADA" />
<rect x="906.5" y="206.5" width="14" height="14" fill="#fff" stroke="#ABABAB" stroke-width="1" />
<path d="M909.5 216l4-4 4 4z" fill="#777" />
<rect x="906.5" y="221.5" width="14" height="248" fill="#fff" stroke="#ABABAB" stroke-width="1" />
<rect x="906.5" y="533.5" width="14" height="14" fill="#fff" stroke="#ABABAB" stroke-width="1" />
<path d="M909.5 538.5h8l-4 4z" fill="#777" />
<rect x="1" y="548" width="922" height="27" fill="#E6E6E6" />
<line x1="1" y1="547.5" x2="923" y2="547.5" stroke="#ABABAB" stroke-width="1" />
<path d="M32 557v7.5l-4-3.75z" fill="#BFBFBF" />
<path d="M57 557v7.5l4-3.75z" fill="#BFBFBF" />
<path d="M101.5 547.5v23h106v-23" fill="#fff" stroke="#ABABAB" stroke-width="1" />
<rect x="102" y="547" width="105" height="1" fill="#fff" />
<rect x="101" y="570" width="107" height="2" fill="#007340" />
<text x="113.5" y="564.8" font-size="13" fill="#007340" font-weight="bold" textLength="82.3" lengthAdjust="spacingAndGlyphs" text-anchor="start" >microexcel.ru</text>
<circle cx="248.7" cy="560.8" r="7.3" fill="none" stroke="#777" stroke-width="1.2"/>
<path d="M244.5 560.8h8.4M248.7 556.6v8.4" fill="none" stroke="#777" stroke-width="1.6" />
<rect x="555" y="556" width="2" height="2" fill="#AAA" />
<rect x="555" y="560" width="2" height="2" fill="#AAA" />
<rect x="555" y="564" width="2" height="2" fill="#AAA" />
<rect x="572" y="554" width="331" height="15" fill="#DADADA" />
<rect x="572.5" y="554.5" width="14" height="14" fill="#fff" stroke="#ABABAB" stroke-width="1" />
<path d="M582 557.5v8l-4-4z" fill="#555" />
<rect x="587.5" y="554.5" width="277" height="14" fill="#fff" stroke="#ABABAB" stroke-width="1" />
<rect x="888.5" y="554.5" width="14" height="14" fill="#fff" stroke="#ABABAB" stroke-width="1" />
<path d="M893 557.5v8l4-4z" fill="#555" />
<line x1="1" y1="575.5" x2="923" y2="575.5" stroke="#C8C8C8" stroke-width="1" />
<rect x="1" y="576" width="922" height="20" fill="#F3F3F3" />
<text x="10.78" y="588.9" transform="scale(0.9,1)" font-size="11.5" fill="#333" textLength="39.44" lengthAdjust="spacing" >Готово</text>
<circle cx="69.9" cy="581.9" r="2.9" fill="#555"/>
<rect x="74.2" y="580.1" width="5.7" height="2.5" fill="#555" />
<path d="M68.7 586v5.2h10.6v-9" fill="none" stroke="#555" stroke-width="1.1" />
<rect x="73.3" y="584.9" width="2" height="1" fill="#555" />
<rect x="76.3" y="584.9" width="2" height="1" fill="#555" />
<rect x="70.3" y="587" width="2" height="1" fill="#555" />
<rect x="73.3" y="587" width="2" height="1" fill="#555" />
<rect x="76.3" y="587" width="2" height="1" fill="#555" />
<rect x="70.3" y="589" width="2" height="1" fill="#555" />
<rect x="73.3" y="589" width="2" height="1" fill="#555" />
<rect x="76.3" y="589" width="2" height="1" fill="#555" />
<rect x="624" y="576" width="38" height="20" fill="#C6C6C6" />
<rect x="636.5" y="579.5" width="12" height="12" fill="none" stroke="#666" stroke-width="1.2" />
<line x1="640.5" y1="579.5" x2="640.5" y2="591.5" stroke="#666" stroke-width="1.2" />
<line x1="644.5" y1="579.5" x2="644.5" y2="591.5" stroke="#666" stroke-width="1.2" />
<line x1="636.5" y1="583.5" x2="648.5" y2="583.5" stroke="#666" stroke-width="1.2" />
<line x1="636.5" y1="587.5" x2="648.5" y2="587.5" stroke="#666" stroke-width="1.2" />
<rect x="674.5" y="579.5" width="13" height="12" fill="none" stroke="#666" stroke-width="1.2" />
<rect x="677.5" y="581.5" width="7" height="8" fill="none" stroke="#666" stroke-width="1" />
<line x1="679" y1="583.5" x2="683" y2="583.5" stroke="#666" stroke-width="1" />
<line x1="679" y1="585.5" x2="683" y2="585.5" stroke="#666" stroke-width="1" />
<line x1="679" y1="587.5" x2="683" y2="587.5" stroke="#666" stroke-width="1" />
<rect x="712.5" y="579.5" width="13" height="12" fill="none" stroke="#666" stroke-width="1.2" />
<path d="M712.5 586.5h8v-7M716.5 579.5v7" fill="none" stroke="#666" stroke-width="1.2" />
<line x1="743" y1="585.5" x2="749" y2="585.5" stroke="#555" stroke-width="2" />
<line x1="753" y1="585.5" x2="853" y2="585.5" stroke="#AAA" stroke-width="1" />
<rect x="800.5" y="580" width="5" height="11" fill="#666" />
<path d="M856 585.5h7.5M859.75 581.75v7.5" fill="none" stroke="#555" stroke-width="1.8" />
<text x="973.22" y="589.2" transform="scale(0.9,1)" font-size="11.5" fill="#333" textLength="32.33" lengthAdjust="spacing" xml:space="preserve">100 %</text>
<rect x="1" y="65" width="1" height="533" fill="#F6F3F4" />
<rect x="923" y="65" width="1" height="533" fill="#F6F3F4" />
<rect x="1" y="596" width="923" height="1" fill="#F8F8F8" />
<rect x="0" y="0" width="1" height="598" fill="#007340" />
<rect x="924" y="0" width="1" height="598" fill="#007340" />
<rect x="0" y="597" width="925" height="1" fill="#007340" />
</g>
</svg>
</body></html>
